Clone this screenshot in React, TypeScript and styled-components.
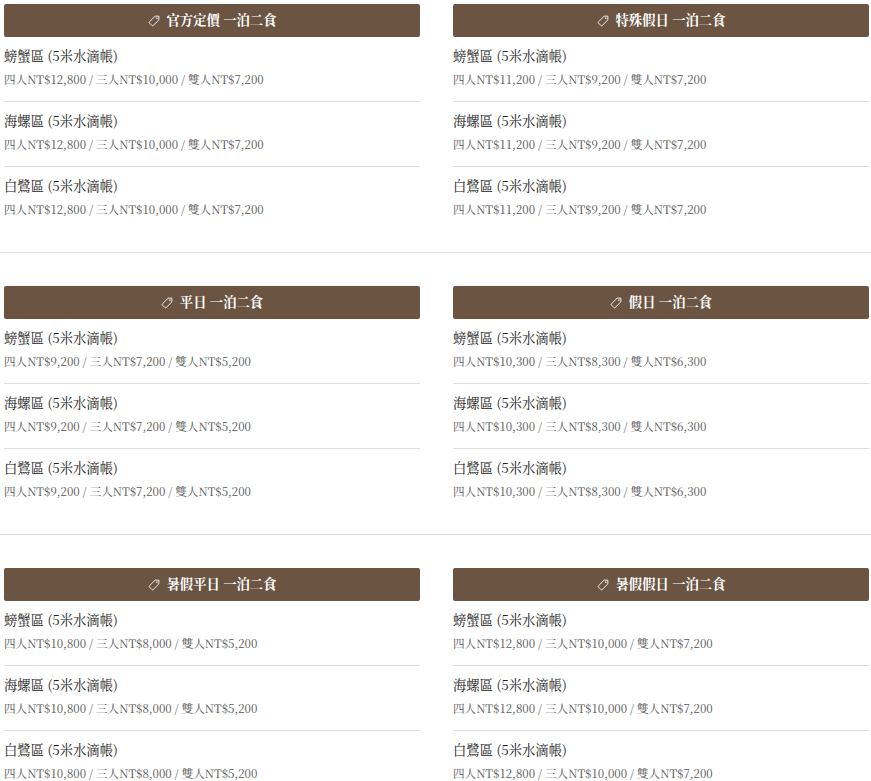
import React from "react";
import styled, { createGlobalStyle } from "styled-components";

const Global = createGlobalStyle`
  html, body { margin: 0; padding: 0; background: #fff; }
  body { font-family: "Noto Serif CJK TC", "Noto Serif CJK JP", "Noto Serif CJK SC", serif; overflow: hidden; }
`;
const Page = styled.div`
  width: 871px;
  height: 781px;
  overflow: hidden;
`;
const Section = styled.section<{ $last?: boolean }>`
  padding: 4px 2px 0 4px;
  box-sizing: border-box;
  border-bottom: ${(p) => (p.$last ? "none" : "1px solid #ddd")};
  height: 253px;
  margin-bottom: 29px;
  display: grid;
  grid-template-columns: 416px 416px;
  column-gap: 33px;
  align-content: start;
`;
const Plan = styled.div`
  display: flex;
  flex-direction: column;
`;
const Header = styled.h3`
  margin: 0;
  height: 33px;
  padding-bottom: 2px;
  box-sizing: border-box;
  background: #6b5442;
  border-radius: 2px;
  color: #fff;
  font-size: 13.33px;
  font-weight: 700;
  display: flex;
  align-items: center;
  justify-content: center;
  gap: 7px;
`;
const Row = styled.div`
  padding: 9px 0 10px;
  height: 65px;
  box-sizing: border-box;
  border-bottom: 1px solid #ddd;
  &:last-child { border-bottom: none; }
`;
const Name = styled.div`
  font-size: 13.33px;
  line-height: 20px;
  color: #222;
`;
const Price = styled.div`
  font-size: 11.58px;
  line-height: 20px;
  margin-top: 3px;
  color: #555;
`;
const TagSvg = styled.svg`
  flex: none;
  margin-top: 2px;
`;
const Tag = () => (
  <TagSvg width="12" height="12" viewBox="0 0 16 16" fill="none" stroke="#fff" strokeWidth="1.2" strokeLinejoin="round">
    <path d="M9.5 1.5h5v5L6.8 14.2a1 1 0 0 1-1.4 0L1.8 10.6a1 1 0 0 1 0-1.4z" />
    <circle cx="11.8" cy="4.2" r="0.6" />
  </TagSvg>
);
const plans = [
  ["官方定價 一泊二食", "12,800", "10,000", "7,200"],
  ["特殊假日 一泊二食", "11,200", "9,200", "7,200"],
  ["平日 一泊二食", "9,200", "7,200", "5,200"],
  ["假日 一泊二食", "10,300", "8,300", "6,300"],
  ["暑假平日 一泊二食", "10,800", "8,000", "5,200"],
  ["暑假假日 一泊二食", "12,800", "10,000", "7,200"],
];
const zones = ["螃蟹區", "海螺區", "白鷺區"];
const PlanCard = ({ p }: { p: string[] }) => (
  <Plan>
    <Header><Tag />{p[0]}</Header>
    {zones.map((z) => (
      <Row key={z}>
        <Name>{z} (5米水滴帳)</Name>
        <Price>四人NT${p[1]} / 三人NT${p[2]} / 雙人NT${p[3]}</Price>
      </Row>
    ))}
  </Plan>
);
export default function App() {
  return (
    <Page>
      <Global />
      {[0, 2, 4].map((i) => (
        <Section key={i} $last={i === 4}>
          <PlanCard p={plans[i]} />
          <PlanCard p={plans[i + 1]} />
        </Section>
      ))}
    </Page>
  );
}
